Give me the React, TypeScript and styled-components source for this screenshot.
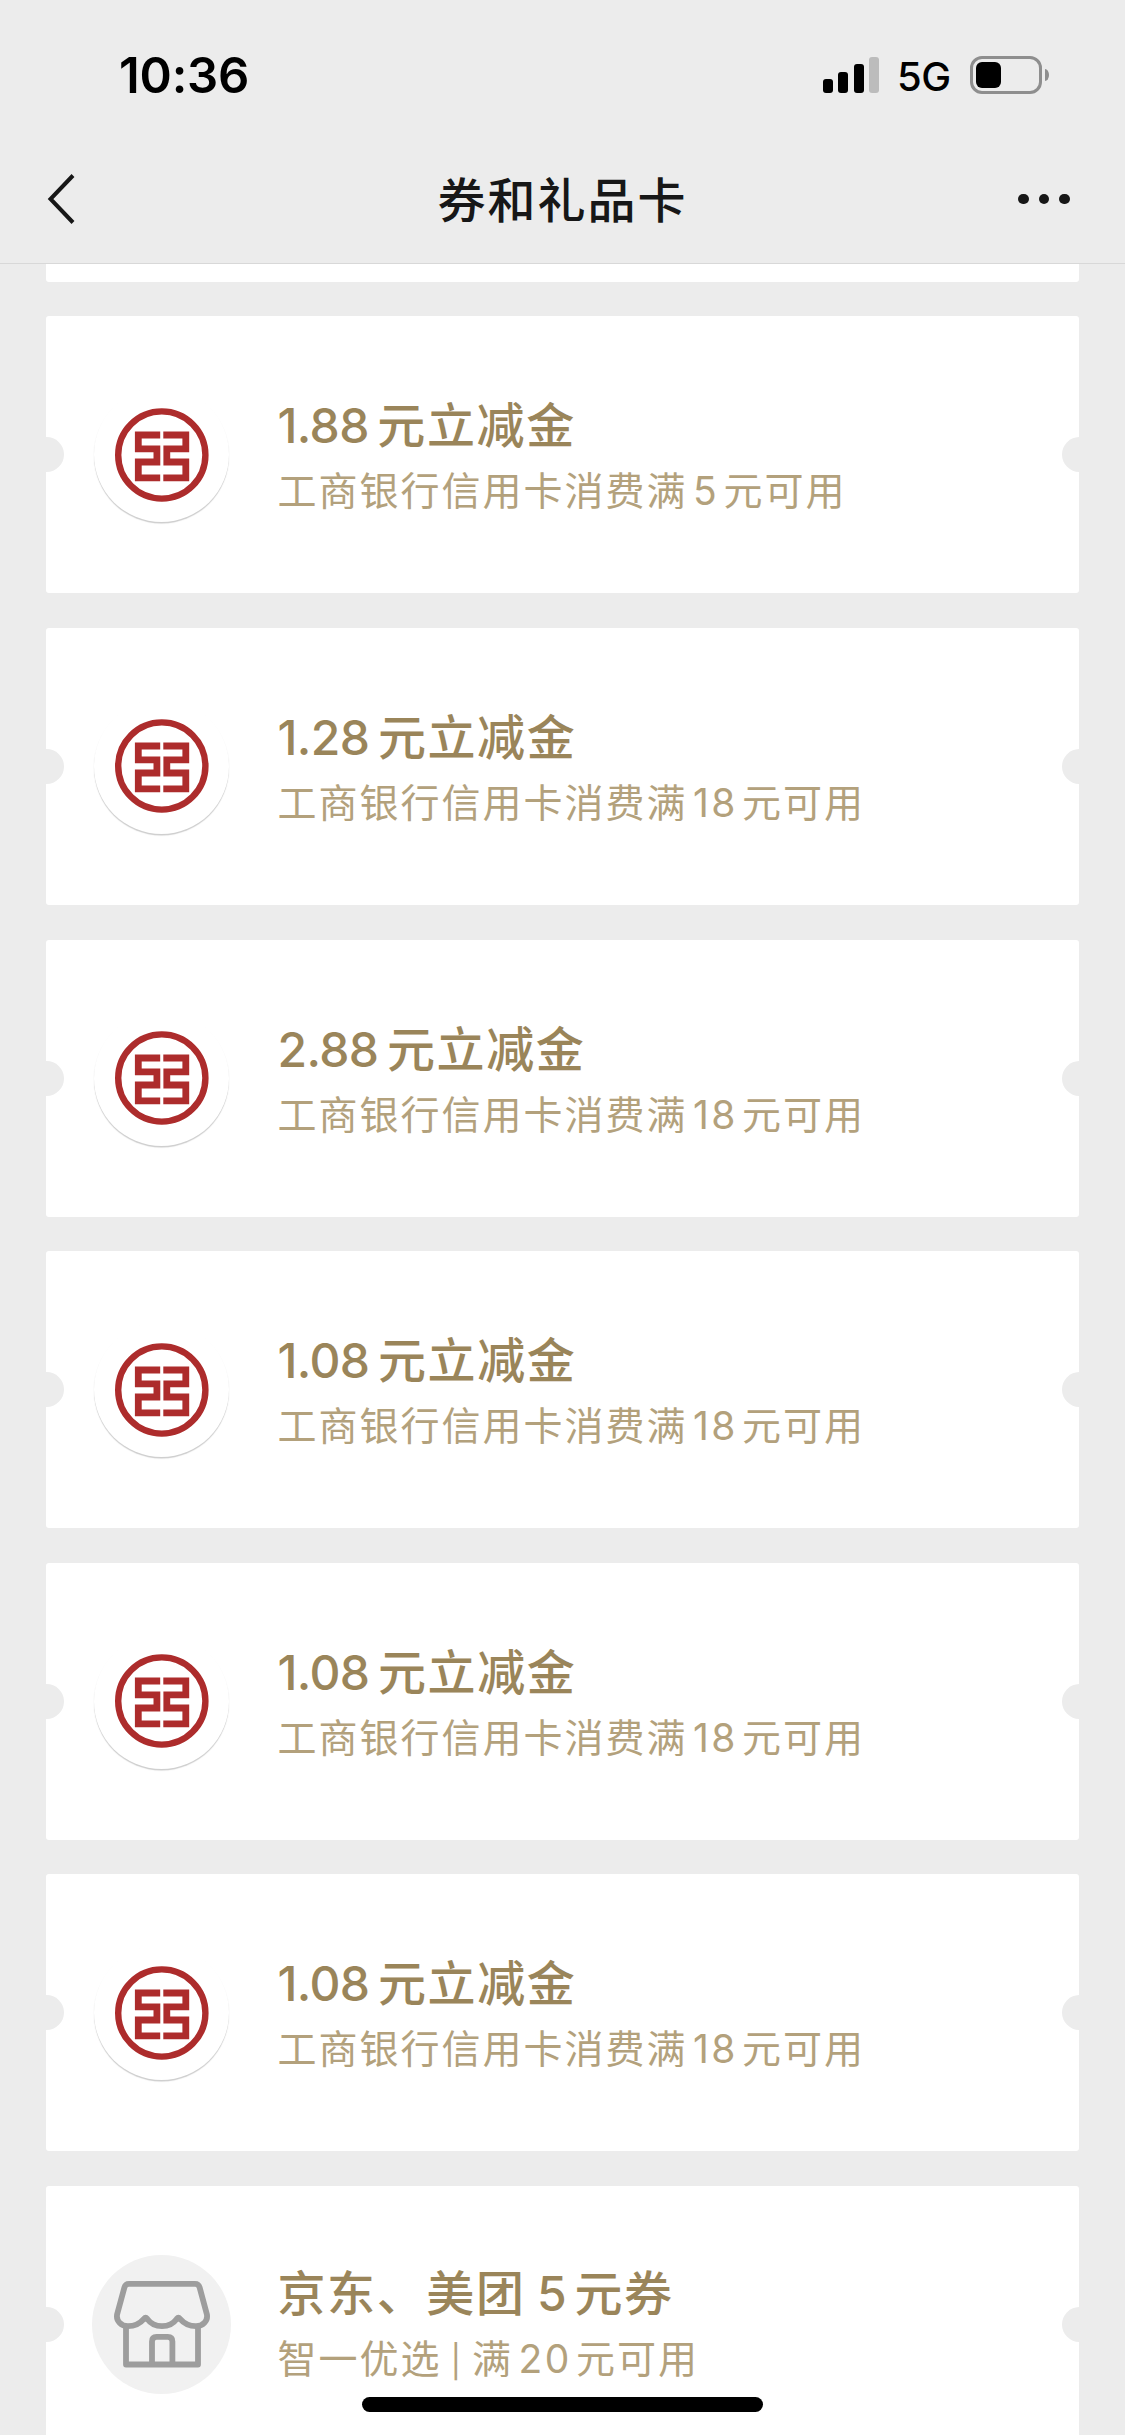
import React from 'react'
import styled, { createGlobalStyle } from 'styled-components'

type CouponData = {
  id: number
  title: string
  desc: string
  kind: 'bank' | 'shop'
}

const coupons: CouponData[] = [
  { id: 1, title: '1.88元立减金', desc: '工商银行信用卡消费满5元可用', kind: 'bank' },
  { id: 2, title: '1.28元立减金', desc: '工商银行信用卡消费满18元可用', kind: 'bank' },
  { id: 3, title: '2.88元立减金', desc: '工商银行信用卡消费满18元可用', kind: 'bank' },
  { id: 4, title: '1.08元立减金', desc: '工商银行信用卡消费满18元可用', kind: 'bank' },
  { id: 5, title: '1.08元立减金', desc: '工商银行信用卡消费满18元可用', kind: 'bank' },
  { id: 6, title: '1.08元立减金', desc: '工商银行信用卡消费满18元可用', kind: 'bank' },
  { id: 7, title: '京东、美团 5元券', desc: '智一优选 | 满20元可用', kind: 'shop' },
]

// numbers and the divider are spaced differently from the chinese text
const formatText = (text: string) =>
  text.split(/([\d.]+|\|)/).map((part, i) => {
    if (part === '|') return <Pipe key={i}>|</Pipe>
    return i % 2 ? <Num key={i}>{part}</Num> : <React.Fragment key={i}>{part}</React.Fragment>
  })

const BankLogo = () => (
  <svg width="94" height="94" viewBox="0 0 94 94" fill="none" stroke="#ad2c2c">
    <circle cx="46.8" cy="47" r="43.6" strokeWidth="6.4" />
    <path d="M45.2 27H23.3V40.9H41.9V54H23.3V69.9H45.2" strokeWidth="6.8" />
    <path d="M48.3 27H70.8V40.9H51.8V54H70.8V69.9H48.3" strokeWidth="6.8" />
  </svg>
)

const ShopIcon = () => (
  <svg width="96" height="88" viewBox="0 0 96 88" fill="none" stroke="#9d9d9d" strokeWidth="5.8" strokeLinejoin="round">
    <path d="M15 3.9H81Q84.6 3.9 85.6 7.4L92.8 34C94.4 41 88.5 46.2 82 46.2C74.5 46.2 70 43.5 65.8 38.6Q64.4 36.8 63 38.6C59.5 43.5 54.5 46.2 48 46.2C41.5 46.2 36.5 43.5 33 38.6Q31.6 36.8 30.2 38.6C26 43.5 21.5 46.2 14 46.2C7.5 46.2 1.6 41 3.2 34L10.4 7.4Q11.4 3.9 15 3.9Z" />
    <path d="M12 46V84.5H84V46" />
    <path d="M38 84V61.5Q38 56.9 42.6 56.9H53.8Q58.4 56.9 58.4 61.5V84" />
  </svg>
)

export default function App() {
  return (
    <Screen>
      <GlobalStyle />
      <StatusBar>
        <Time>10:36</Time>
        <StatusIcons>
          <Signal>
            <Bar h={14} />
            <Bar h={21} />
            <Bar h={29} />
            <Bar h={36} weak />
          </Signal>
          <Network>5G</Network>
          <Battery>
            <BatteryBody>
              <BatteryLevel />
            </BatteryBody>
            <BatteryTip />
          </Battery>
        </StatusIcons>
      </StatusBar>
      <NavBar>
        <NavSide>
          <svg width="28" height="52" viewBox="0 0 28 52" fill="none" stroke="#171717" strokeWidth="4">
            <path d="M26 2.5L3.5 26L26 49.5" />
          </svg>
        </NavSide>
        <NavTitle>券和礼品卡</NavTitle>
        <NavSide right>
          <Dot />
          <Dot />
          <Dot />
        </NavSide>
      </NavBar>
      <List>
        <PreviousCard />
        {coupons.map((c) => (
          <Card key={c.id}>
            <IconSlot>
              <IconCircle shop={c.kind === 'shop'}>
                {c.kind === 'shop' ? <ShopIcon /> : <BankLogo />}
              </IconCircle>
            </IconSlot>
            <Info>
              <Title>{formatText(c.title)}</Title>
              <Desc>{formatText(c.desc)}</Desc>
            </Info>
          </Card>
        ))}
      </List>
      <HomeIndicator />
    </Screen>
  )
}

const GlobalStyle = createGlobalStyle`
  * {
    box-sizing: border-box;
  }

  body {
    margin: 0;
    background: #ececec;
  }
`

const Screen = styled.div`
  position: relative;
  width: 1125px;
  height: 2435px;
  overflow: hidden;
  background: #ececec;
  font-family: Inter, 'Noto Sans CJK SC', sans-serif;
  display: flex;
  flex-direction: column;
`

const StatusBar = styled.header`
  height: 136px;
  flex-shrink: 0;
  display: flex;
  justify-content: space-between;
  align-items: flex-start;
  padding: 54px 76px 0 119px;
`

const Time = styled.div`
  padding-top: 1px;
  font-size: 49px;
  line-height: 42px;
  font-weight: 600;
  letter-spacing: -0.2px;
  color: #000;
`

const StatusIcons = styled.div`
  display: flex;
  align-items: center;
  height: 42px;
`

const Signal = styled.div`
  display: flex;
  align-items: flex-end;
  gap: 5.4px;
  height: 36px;
`

const Bar = styled.i<{ h: number; weak?: boolean }>`
  width: 10px;
  height: ${({ h }) => h}px;
  border-radius: 3px;
  background: ${({ weak }) => (weak ? '#bcbcbc' : '#000')};
`

const Network = styled.div`
  width: 53px;
  margin: 3px 20px 0 18px;
  font-size: 40px;
  line-height: 40px;
  font-weight: 500;
  letter-spacing: -0.5px;
  color: #000;
`

const Battery = styled.div`
  display: flex;
  align-items: center;
  gap: 3px;
`

const BatteryBody = styled.div`
  width: 72px;
  height: 38px;
  padding: 3px;
  border: 3px solid #8e8e8e;
  border-radius: 12px;
`

const BatteryLevel = styled.div`
  width: 25px;
  height: 26px;
  border-radius: 6px;
  background: #000;
`

const BatteryTip = styled.div`
  width: 4px;
  height: 12px;
  border-radius: 0 4px 4px 0 / 0 6px 6px 0;
  background: #8e8e8e;
`

const NavBar = styled.nav`
  height: 128px;
  flex-shrink: 0;
  display: flex;
  align-items: center;
  justify-content: space-between;
  padding: 0 55px 1px 47px;
  border-bottom: 1px solid #d8d8d8;
`

const NavSide = styled.div<{ right?: boolean }>`
  width: ${({ right }) => (right ? 134 : 142)}px;
  display: flex;
  align-items: center;
  gap: 10px;
  justify-content: ${({ right }) => (right ? 'flex-end' : 'flex-start')};
`

const Dot = styled.i`
  width: 10.5px;
  height: 10.5px;
  border-radius: 50%;
  background: #171717;
`

const NavTitle = styled.h1`
  margin: 0;
  padding-top: 3px;
  font-size: 48px;
  line-height: 60px;
  font-weight: 500;
  letter-spacing: 2px;
  color: #171717;
`

const List = styled.main`
  display: flex;
  flex-direction: column;
  gap: 34.6px;
  padding: 0 46px;
`

// bottom edge of the card scrolled under the nav bar
const PreviousCard = styled.div`
  height: 17.8px;
  flex-shrink: 0;
  border-radius: 0 0 3px 3px;
  background: #fff;
`

const Card = styled.article`
  position: relative;
  height: 277px;
  flex-shrink: 0;
  display: flex;
  align-items: center;
  padding-left: 46px;
  border-radius: 3px;
  background: #fff;
  overflow: hidden;

  /* ticket notches */
  &::before,
  &::after {
    content: '';
    position: absolute;
    top: calc(50% - 17.5px);
    width: 35px;
    height: 35px;
    border-radius: 50%;
    background: #ececec;
  }

  &::before {
    left: -17.5px;
  }

  &::after {
    right: -17.5px;
  }
`

const IconSlot = styled.div`
  width: 139px;
  flex-shrink: 0;
  display: flex;
  justify-content: center;
`

const IconCircle = styled.div<{ shop?: boolean }>`
  width: ${({ shop }) => (shop ? 139 : 135)}px;
  height: ${({ shop }) => (shop ? 139 : 135)}px;
  display: flex;
  align-items: center;
  justify-content: center;
  border-radius: 50%;
  background: ${({ shop }) => (shop ? '#f1f1f1' : '#fff')};
  box-shadow: ${({ shop }) => (shop ? 'none' : '0 1.5px 1px rgba(0, 0, 0, 0.2)')};
`

const Num = styled.span``

const Pipe = styled.span`
  font-size: 32px;
`

const Info = styled.div`
  margin-left: 46.5px;
  padding-top: 7px;
`

const Title = styled.h2`
  margin: 0;
  font-size: 48px;
  line-height: 66px;
  font-weight: 500;
  letter-spacing: 1.6px;
  word-spacing: -3px;
  color: #9a855a;
  white-space: pre;

  ${Num} {
    margin-right: 8.5px;
    letter-spacing: -0.6px;
  }
`

const Desc = styled.p`
  margin: 0;
  font-size: 39px;
  line-height: 64px;
  font-weight: 400;
  letter-spacing: 2px;
  word-spacing: -4px;
  color: #b3a17c;
  white-space: pre;

  ${Num} {
    margin: 0 4.5px 0 5.5px;
    letter-spacing: 2.3px;
  }
`

const HomeIndicator = styled.div`
  position: absolute;
  left: 362px;
  bottom: 23px;
  width: 401px;
  height: 15px;
  border-radius: 8px;
  background: #000;
`
